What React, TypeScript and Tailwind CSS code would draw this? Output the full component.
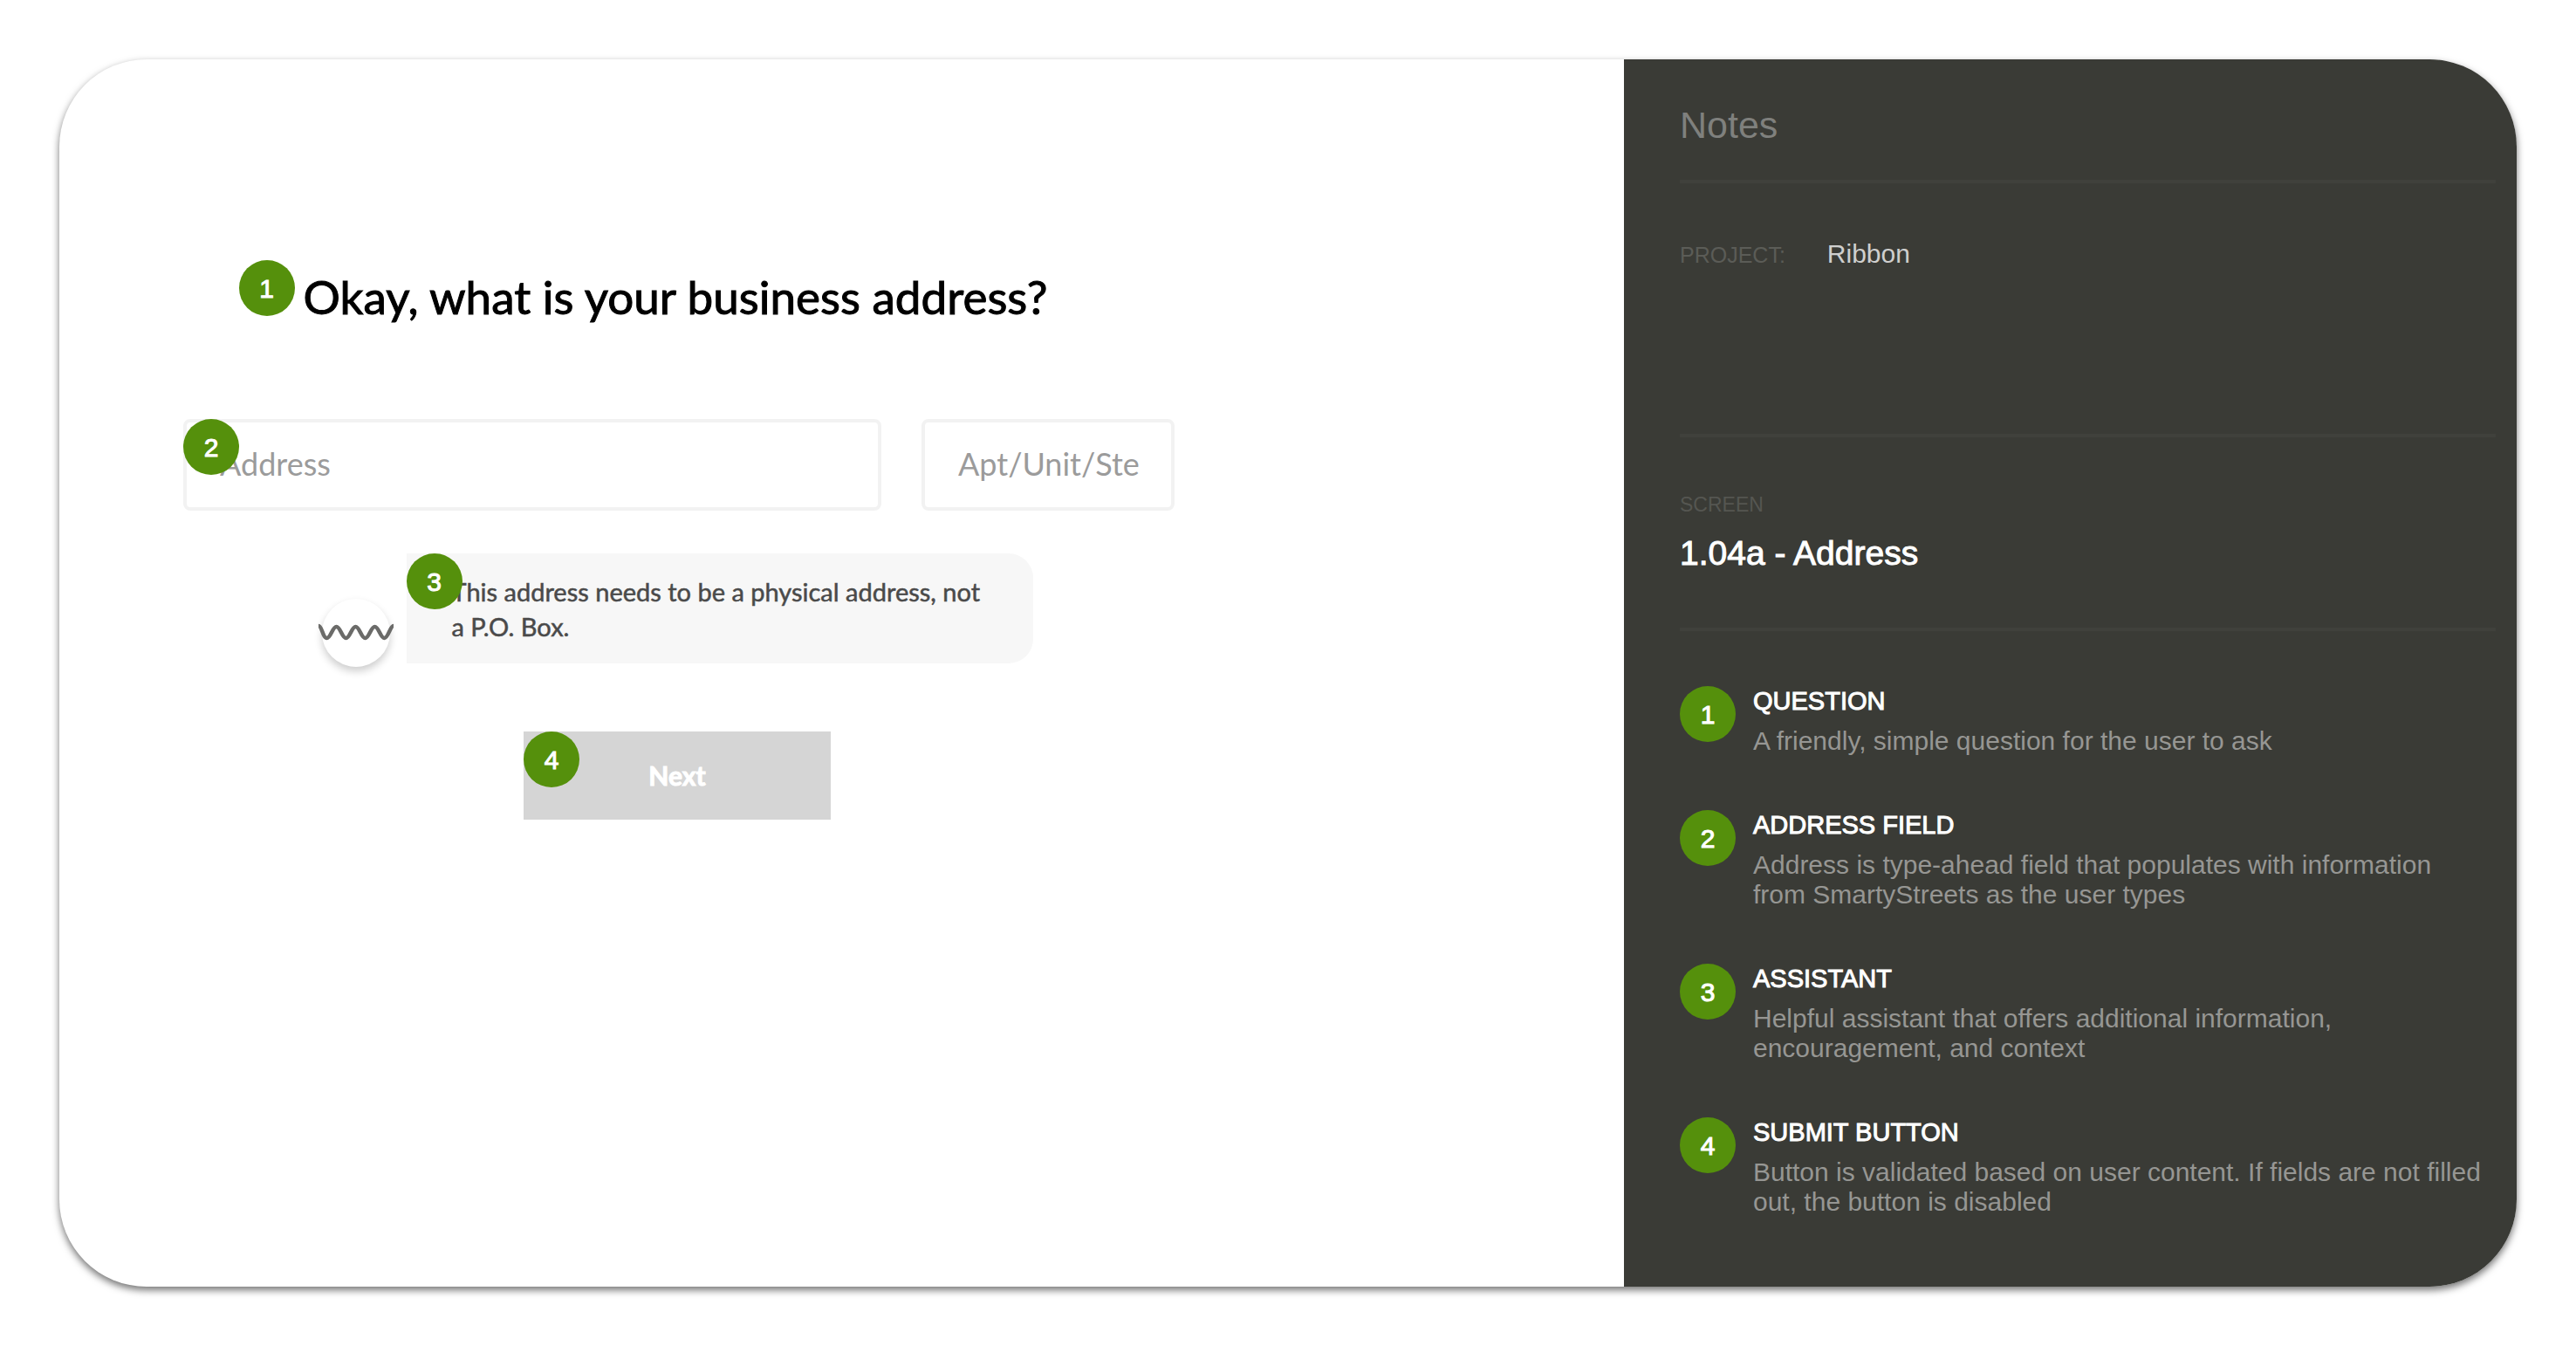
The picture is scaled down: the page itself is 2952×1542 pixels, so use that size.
import type { ReactNode } from "react";

function Badge({ n, className = "" }: { n: number; className?: string }) {
  return (
    <span
      className={`flex size-16 shrink-0 items-center justify-center rounded-full bg-[#55900c] pt-[2px] font-['Liberation_Sans',sans-serif] text-[30px] leading-none font-normal text-white [-webkit-text-stroke:1px_white] ${className}`}
    >
      {n}
    </span>
  );
}

function Wave() {
  return (
    <svg viewBox="0 0 88 24" className="absolute top-[27px] -left-[5px] h-6 w-[88px]" fill="none" aria-hidden="true">
      <path
        d="M1 4C5 4 6 18 10.500 18S17 5 21.500 5S28 18 32.500 18S39 5 43.500 5S50 18 54.500 18S61 5 65.500 5S72 18 76.500 18S83 4 87 4"
        stroke="#6b6b69"
        strokeWidth="4.500"
      />
    </svg>
  );
}

const notes = [
  { title: "QUESTION", lines: ["A friendly, simple question for the user to ask"] },
  {
    title: "ADDRESS FIELD",
    lines: ["Address is type-ahead field that populates with information", "from SmartyStreets as the user types"],
  },
  {
    title: "ASSISTANT",
    lines: ["Helpful assistant that offers additional information,", "encouragement, and context"],
  },
  {
    title: "SUBMIT BUTTON",
    lines: ["Button is validated based on user content. If fields are not filled", "out, the button is disabled"],
  },
];

function Rule({ className = "" }: { className?: string }) {
  return <hr className={`h-1 border-0 bg-[#40413c] ${className}`} />;
}

function Field({ id, label, className, children }: { id: string; label: string; className: string; children?: ReactNode }) {
  return (
    <div className={`relative ${className}`}>
      <input
        id={id}
        type="text"
        aria-label={label}
        placeholder={label}
        className="h-[105px] w-full rounded-lg border-4 border-[#f2f2f2] bg-white pr-4 pb-1 pl-[38px] text-[36px] text-[#444] placeholder:text-[#9b9b9b]"
      />
      {children}
    </div>
  );
}

export default function App() {
  return (
    <div className="flex min-h-screen bg-white p-[68px]">
      <div className="grid flex-1 grid-cols-[1793fr_1023fr] overflow-hidden rounded-[100px] bg-white shadow-[0_4px_9px_rgba(0,0,0,0.55)]">
        <main className="pt-[230px] pl-[142px] font-['Lato',sans-serif]">
          <form className="flex max-w-[1136px] flex-col items-center" onSubmit={(e) => e.preventDefault()}>
            <div className="pr-2">
              <div className="relative">
                <h1 className="text-[53px] leading-[84px] text-black [-webkit-text-stroke:1px_black]">
                  Okay, what is your business address?
                </h1>
                <Badge n={1} className="absolute top-0 -left-[74px]" />
              </div>
            </div>

            <div className="mt-[98px] flex w-full gap-[46px]">
              <Field id="address" label="Address" className="flex-1">
                <Badge n={2} className="absolute top-0 left-0" />
              </Field>
              <Field id="unit" label="Apt/Unit/Ste" className="w-[290px]" />
            </div>

            <div className="mt-[49px] flex items-start gap-[19px] pr-1">
              <div className="relative mt-[52px] size-[78px] rounded-full bg-white shadow-[0_5px_10px_rgba(0,0,0,0.2)]">
                <Wave />
              </div>
              <div className="relative w-[718px] rounded-r-[28px] bg-[#f7f7f7] pt-6 pr-10 pb-[22px] pl-[52px]">
                <p className="text-[29px] leading-10 text-[#4a4a4a] [-webkit-text-stroke:0.5px_#4a4a4a]">
                  This address needs to be a physical address, not
                  <br />a P.O. Box.
                </p>
                <Badge n={3} className="absolute top-0 left-0" />
              </div>
            </div>

            <div className="mt-[74px] pr-1">
              <div className="relative">
                <button
                  type="submit"
                  className="h-[101px] w-[352px] bg-[#d5d5d5] text-[30px] font-bold text-white [-webkit-text-stroke:1px_white]"
                >
                  Next
                </button>
                <Badge n={4} className="absolute top-0 left-0" />
              </div>
            </div>
          </form>
        </main>

        <aside className="bg-[#3a3b36] pt-[50px] pr-6 pb-16 pl-16 font-['Liberation_Sans',sans-serif]">
          <h2 className="text-[43px] leading-[50px] text-[#7f807d]">Notes</h2>
          <Rule className="mt-[38px]" />
          <dl className="mt-[61px] flex items-baseline gap-12">
            <dt className="text-[25px] leading-10 text-[#5b5c57]">PROJECT:</dt>
            <dd className="text-[30px] leading-10 text-[#cfcfce]">Ribbon</dd>
          </dl>
          <Rule className="mt-[185px]" />
          <p className="mt-[61px] text-[23px] leading-8 text-[#555651]">SCREEN</p>
          <p className="mt-4 text-[39px] leading-12 text-white [-webkit-text-stroke:1px_white]">1.04a - Address</p>
          <Rule className="mt-[61px]" />
          <ol className="mt-[63px] flex flex-col gap-[62px]">
            {notes.map((note, i) => (
              <li key={note.title} className="flex gap-5">
                <Badge n={i + 1} />
                <div>
                  <h3 className="text-[29px] leading-[34px] text-white [-webkit-text-stroke:1px_white]">{note.title}</h3>
                  <p className="mt-3 text-[30px] leading-[34px] text-[#969693]">
                    {note.lines.map((line) => (
                      <span key={line} className="block whitespace-nowrap">
                        {line}
                      </span>
                    ))}
                  </p>
                </div>
              </li>
            ))}
          </ol>
        </aside>
      </div>
    </div>
  );
}
